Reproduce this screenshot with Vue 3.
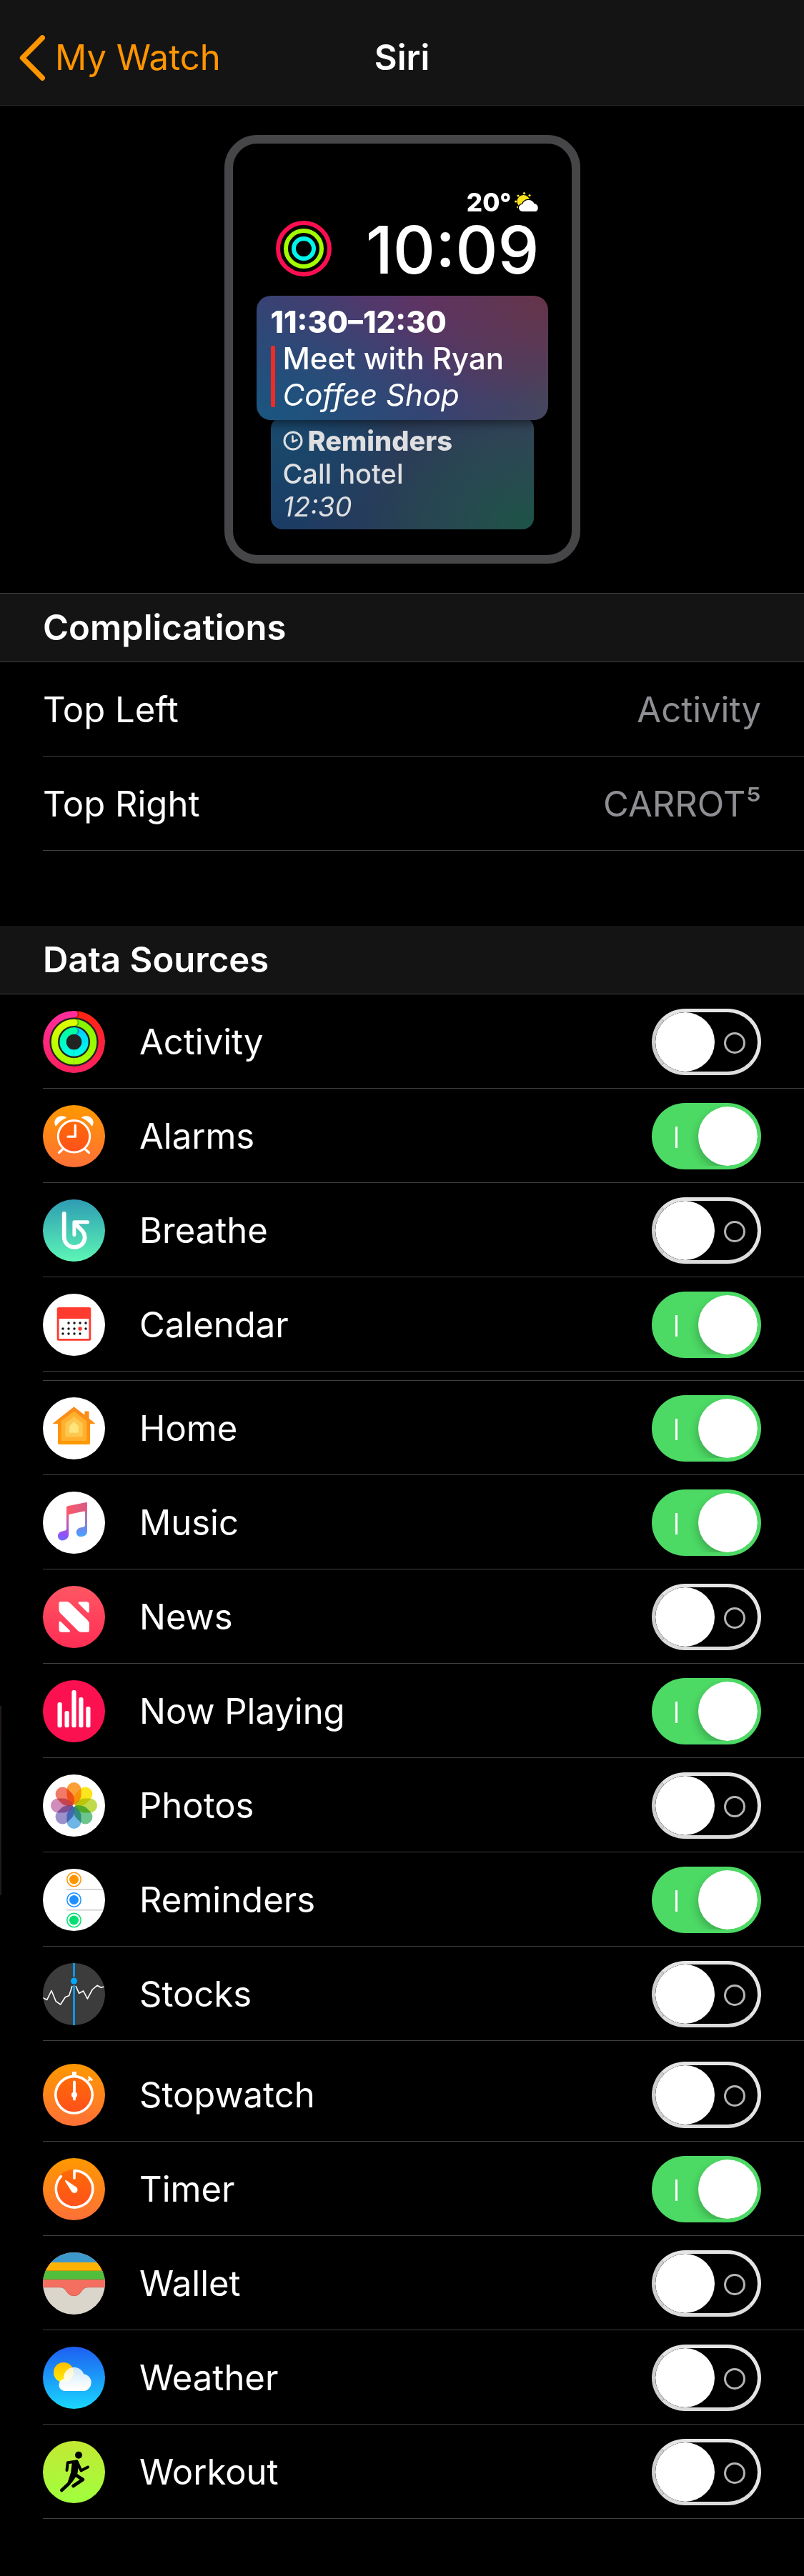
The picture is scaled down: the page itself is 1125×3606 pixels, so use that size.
<script setup>
import { ref, reactive } from 'vue'

const complications = ref([
  { slot: 'Top Left', value: 'Activity' },
  { slot: 'Top Right', value: 'CARROT⁵' },
])

const groups = reactive([
  {
    id: 'first',
    items: [
      { id: 'activity', name: 'Activity', on: false },
      { id: 'alarms', name: 'Alarms', on: true },
      { id: 'breathe', name: 'Breathe', on: false },
      { id: 'calendar', name: 'Calendar', on: true },
    ],
  },
  {
    id: 'second',
    items: [
      { id: 'home', name: 'Home', on: true },
      { id: 'music', name: 'Music', on: true },
      { id: 'news', name: 'News', on: false },
      { id: 'playing', name: 'Now Playing', on: true },
      { id: 'photos', name: 'Photos', on: false },
      { id: 'reminders', name: 'Reminders', on: true },
      { id: 'stocks', name: 'Stocks', on: false },
    ],
  },
  {
    id: 'third',
    items: [
      { id: 'stopwatch', name: 'Stopwatch', on: false },
      { id: 'timer', name: 'Timer', on: true },
      { id: 'wallet', name: 'Wallet', on: false },
      { id: 'weather', name: 'Weather', on: false },
      { id: 'workout', name: 'Workout', on: false },
    ],
  },
])

const petals = ['#fba038', '#fbe51c', '#bfdb4c', '#6cc58c', '#6fb5e5', '#9c90cb', '#d08cba', '#f27a68']

const calendarDots = [
  [36, 41], [44, 41], [52, 41], [60, 41],
  [28, 49], [36, 49], [44, 49], [60, 49],
  [28, 56], [36, 56], [44, 56], [52, 56],
]

const playingBars = [
  [20.5, 31], [30.5, 43], [40.4, 14], [50.3, 24], [60.3, 37],
]

const reminderDots = [
  [15, '#ff9500'], [43.5, '#1e90ff'], [72, '#00e070'],
]
</script>

<template>
  <div class="screen">
    <header class="navbar">
      <a class="back" href="#my-watch">
        <svg class="chevron" viewBox="0 0 36 64" aria-hidden="true">
          <path d="M32.3 3.8 L4.5 32 L32.3 60.2" fill="none" stroke="#ff9500" stroke-width="7.4" stroke-linecap="round" stroke-linejoin="round" />
        </svg>
        <span>My Watch</span>
      </a>
      <h1 class="title">Siri</h1>
    </header>

    <main>
      <div class="preview">
        <div class="watch">
          <div class="temperature">
            <span>20°</span>
            <svg class="forecast" viewBox="0 0 34 28" aria-hidden="true">
              <g fill="#fde51c">
                <circle cx="12.5" cy="13" r="9" />
                <circle cx="13.5" cy="1.6" r="1.6" />
                <circle cx="5" cy="5" r="1.6" />
                <circle cx="21" cy="4.5" r="1.6" />
                <circle cx="1.7" cy="13" r="1.6" />
                <circle cx="4.5" cy="21" r="1.4" />
              </g>
              <path d="M11 27 a5 5 0 0 1 0 -10 a9 9 0 0 1 16.500 -1 a6 6 0 0 1 2.500 11 z" fill="#fff" stroke="#000" stroke-width="2.500" paint-order="stroke" />
            </svg>
          </div>
          <div class="clock-row">
            <svg class="rings" viewBox="0 0 78 78" fill="none" stroke-width="6" aria-hidden="true">
              <circle cx="39" cy="39" r="36" stroke="#fc0f50" />
              <circle cx="39" cy="39" r="25" stroke="#a3fd00" />
              <circle cx="39" cy="39" r="14" stroke="#00f6ea" />
            </svg>
            <time class="clock">10:09</time>
          </div>

          <article class="card event">
            <strong>11:30–12:30</strong>
            <div class="event-body">
              <span class="event-bar"></span>
              <div class="lines">
                <span>Meet with Ryan</span>
                <em>Coffee Shop</em>
              </div>
            </div>
          </article>
          <article class="card reminder">
            <div class="reminder-head">
              <svg class="reminder-clock" viewBox="0 0 28 28" fill="none" stroke="#dfdfe1" stroke-linecap="round" stroke-linejoin="round" aria-hidden="true">
                <circle cx="14" cy="14" r="12" stroke-width="3" />
                <path d="M13.500 7.500 V15.500 L19.500 13" stroke-width="2.600" />
              </svg>
              <strong>Reminders</strong>
            </div>
            <span>Call hotel</span>
            <em>12:30</em>
          </article>
        </div>
      </div>

      <section>
        <h2 class="heading heading-ruled">Complications</h2>
        <ul class="rows">
          <li v-for="c in complications" :key="c.slot" class="row">
            <span class="name">{{ c.slot }}</span>
            <span class="value">{{ c.value }}</span>
          </li>
        </ul>
      </section>

      <section class="sources">
        <h2 class="heading">Data Sources</h2>
        <ul v-for="g in groups" :key="g.id" class="rows" :class="'group-' + g.id">
          <li v-for="item in g.items" :key="item.id" class="row">
            <svg class="icon" viewBox="0 0 87 87" aria-hidden="true">
              <template v-if="item.id === 'activity'">
                <defs>
                  <linearGradient id="ringA1" x1="0" y1="0" x2="0" y2="1"><stop offset="0" stop-color="#ff2412" /><stop offset="1" stop-color="#ff2060" /></linearGradient>
                  <linearGradient id="ringA2" x1="0" y1="0" x2="0" y2="1"><stop offset="0" stop-color="#ff2d9b" /><stop offset="1" stop-color="#ff2060" /></linearGradient>
                  <linearGradient id="ringB1" x1="0" y1="0" x2="0" y2="1"><stop offset="0" stop-color="#86f800" /><stop offset="1" stop-color="#a8ff00" /></linearGradient>
                  <linearGradient id="ringB2" x1="0" y1="0" x2="0" y2="1"><stop offset="0" stop-color="#dcff00" /><stop offset="1" stop-color="#a8ff00" /></linearGradient>
                  <linearGradient id="ringC1" x1="0" y1="0" x2="0" y2="1"><stop offset="0" stop-color="#00d2ff" /><stop offset="1" stop-color="#00fce6" /></linearGradient>
                  <linearGradient id="ringC2" x1="0" y1="0" x2="0" y2="1"><stop offset="0" stop-color="#00ffa0" /><stop offset="1" stop-color="#00fce6" /></linearGradient>
                </defs>
                <rect width="87" height="87" fill="#222" />
                <g fill="none" stroke-width="9.300">
                  <path d="M43.500 4.600 A38.900 38.900 0 0 1 43.500 82.400" stroke="url(#ringA1)" />
                  <path d="M43.500 16.300 A27.200 27.200 0 0 1 43.500 70.700" stroke="url(#ringB1)" />
                  <path d="M43.500 28 A15.500 15.500 0 0 1 43.500 59" stroke="url(#ringC1)" />
                </g>
                <g fill="#000" opacity="0.300">
                  <circle cx="46" cy="5" r="4.600" />
                  <circle cx="46" cy="16.800" r="4.600" />
                  <circle cx="46" cy="28.500" r="4.600" />
                </g>
                <g fill="none" stroke-width="9.300">
                  <path d="M43.600 4.600 A38.900 38.900 0 0 0 43.600 82.400" stroke="url(#ringA2)" />
                  <path d="M43.600 16.300 A27.200 27.200 0 0 0 43.600 70.700" stroke="url(#ringB2)" />
                  <path d="M43.600 28 A15.500 15.500 0 0 0 43.600 59" stroke="url(#ringC2)" />
                </g>
                <circle cx="44" cy="4.600" r="4.650" fill="#ff2d9b" />
                <circle cx="44" cy="16.300" r="4.650" fill="#dcff00" />
                <circle cx="44" cy="28" r="4.650" fill="#00ffa0" />
              </template>

              <template v-else-if="item.id === 'alarms'">
                <rect width="87" height="87" fill="url(#orangeBg)" />
                <circle cx="43.500" cy="43.800" r="22.200" fill="url(#orangeDial)" stroke="#fff" stroke-width="3" />
                <path d="M45.300 28.500 V44.200 H35" fill="none" stroke="#fff" stroke-width="3.300" stroke-linecap="round" stroke-linejoin="round" />
                <path d="M17.500 29 C13 20 22 12 32 16.500 C33 17 33 17.600 32.300 18 C27 20.500 22 24 19 28.800 C18.500 29.600 17.900 29.700 17.500 29 Z M69.500 29 C74 20 65 12 55 16.500 C54 17 54 17.600 54.700 18 C60 20.500 65 24 68 28.800 C68.500 29.600 69.100 29.700 69.500 29 Z" fill="#fff" />
                <path d="M28 61.500 L22.500 66.500 M59 61.500 L64.500 66.500" stroke="#fff" stroke-width="3.300" stroke-linecap="round" />
              </template>

              <template v-else-if="item.id === 'breathe'">
                <defs>
                  <linearGradient id="breatheBg" x1="0" y1="0" x2="0" y2="1"><stop offset="0" stop-color="#2e9cb3" /><stop offset="1" stop-color="#5df6b6" /></linearGradient>
                </defs>
                <rect width="87" height="87" fill="url(#breatheBg)" />
                <g fill="none" stroke="#fff" stroke-width="5.800" stroke-linecap="round" stroke-linejoin="round">
                  <path d="M29.700 19.800 V52 C29.700 61 36 66.800 44.200 66.800 C52.500 66.800 58.600 60.800 58.600 53 C58.600 45 52 41.500 45 33.500" />
                  <path d="M62.500 31.800 H43.900 V49.500" stroke-width="5" />
                </g>
              </template>

              <template v-else-if="item.id === 'calendar'">
                <rect width="87" height="87" fill="#fff" />
                <rect x="19.700" y="19" width="47.600" height="46.700" rx="2.500" fill="#ff3b30" />
                <rect x="22.600" y="35" width="41.800" height="28" fill="#fff" />
                <circle v-for="(d, i) in calendarDots" :key="i" :cx="d[0]" :cy="d[1]" r="1.700" fill="#111" />
                <circle cx="52" cy="49" r="2.700" fill="#ff3b30" />
              </template>

              <template v-else-if="item.id === 'home'">
                <defs>
                  <linearGradient id="homeOuter" x1="0" y1="0" x2="0" y2="1"><stop offset="0" stop-color="#fa8a1e" /><stop offset="1" stop-color="#ff9800" /></linearGradient>
                </defs>
                <rect width="87" height="87" fill="#fff" />
                <path d="M43.500 13.200 L58.400 24.800 V20.200 Q58.400 19.400 59.200 19.400 H63.800 Q64.600 19.400 64.600 20.200 V29.800 L72.800 36.200 Q73 37.200 72 37.200 H66 V64 Q66 66 64 66 H23 Q21 66 21 64 V37.200 H15 Q14 37.200 14.200 36.200 Z" fill="url(#homeOuter)" />
                <path d="M43.500 19.500 L61.300 33 V59.500 Q61.300 61 59.800 61 H27.200 Q25.700 61 25.700 59.500 V33 Z" fill="#ffb02e" />
                <path d="M43.500 26.700 L55.700 36.500 V54 Q55.700 55.200 54.500 55.200 H32.500 Q31.300 55.200 31.300 54 V36.500 Z" fill="#fdc850" />
                <path d="M43.500 34.300 L49.800 40.300 V48.700 Q49.800 49.700 48.800 49.700 H38.200 Q37.200 49.700 37.200 48.700 V40.300 Z" fill="#ffe47c" />
              </template>

              <template v-else-if="item.id === 'music'">
                <defs>
                  <linearGradient id="noteLeft" gradientUnits="userSpaceOnUse" x1="40" y1="22" x2="28" y2="68"><stop offset="0" stop-color="#fc5866" /><stop offset="0.500" stop-color="#c058b8" /><stop offset="0.850" stop-color="#8f52f8" /><stop offset="1" stop-color="#6f6cff" /></linearGradient>
                  <linearGradient id="noteRight" gradientUnits="userSpaceOnUse" x1="52" y1="16" x2="58" y2="63"><stop offset="0" stop-color="#f05a72" /><stop offset="0.450" stop-color="#a878b8" /><stop offset="0.850" stop-color="#5b93f6" /><stop offset="1" stop-color="#44a8fb" /></linearGradient>
                  <linearGradient id="noteBeam" x1="0" y1="0" x2="1" y2="0"><stop offset="0" stop-color="#fc5868" /><stop offset="1" stop-color="#d85c88" /></linearGradient>
                </defs>
                <rect width="87" height="87" fill="#fff" />
                <path d="M33 24 H36.100 V60 C36.100 65 32 68.400 27 68.400 C23.500 68.400 21 65.800 21 62.300 C21 58.500 23.500 56 28 55.200 C31.500 54.600 33 54.200 33 51.500 Z" fill="url(#noteLeft)" />
                <path d="M58.900 18 H62 V55 C62 60.500 58.500 63.100 53 63.100 C49.300 63.100 46.800 60.500 46.800 57.200 C46.800 53.500 49.200 51 53.500 50.300 C57 49.700 58.900 49.200 58.900 46.500 Z" fill="url(#noteRight)" />
                <path d="M33 22.500 Q33 20.700 34.700 20.300 L60.500 15.100 Q62 14.900 62 16.400 V28.500 H58.900 Q58.900 27.300 57.600 27.600 L37.500 31.700 Q36.100 32 36.100 33.500 H33 Z" fill="url(#noteBeam)" />
              </template>

              <template v-else-if="item.id === 'news'">
                <defs>
                  <linearGradient id="newsBg" x1="0" y1="0" x2="0" y2="1"><stop offset="0" stop-color="#ff5763" /><stop offset="1" stop-color="#ff2d55" /></linearGradient>
                </defs>
                <rect width="87" height="87" fill="url(#newsBg)" />
                <g fill="#fff" stroke="#fff" stroke-width="5" stroke-linejoin="round">
                  <path d="M24.900 24.600 H33 Q35 24.600 36.500 26 L61 50 Q62.400 51.400 62.400 53.500 V62.200 H54 Q52 62.200 50.500 60.800 L26.300 36.500 Q24.900 35 24.900 33 Z" />
                  <path d="M51 23.700 H61 Q63.300 23.700 63.300 26 V36 Z" stroke-width="3" />
                  <path d="M24 51 V61 Q24 63.200 26.200 63.200 H36.500 Z" stroke-width="3" />
                </g>
              </template>

              <template v-else-if="item.id === 'playing'">
                <rect width="87" height="87" fill="#fc1150" />
                <rect v-for="(b, i) in playingBars" :key="i" :x="b[0]" :y="b[1]" width="6.200" :height="66.200 - b[1]" rx="2.500" fill="#fff" />
              </template>

              <template v-else-if="item.id === 'photos'">
                <rect width="87" height="87" fill="#fff" />
                <g transform="translate(43.500 43.500)">
                  <path v-for="(p, i) in petals" :key="p" class="petal" d="M0 -0.500 C-4 -3 -10 -8.500 -10 -14 V-22.500 A10 10 0 0 1 10 -22.500 V-14 C10 -8.500 4 -3 0 -0.500 Z" :fill="p" :transform="`rotate(${i * 45})`" />
                </g>
                <circle cx="43.500" cy="43.500" r="1.800" fill="#fff" />
              </template>

              <template v-else-if="item.id === 'reminders'">
                <rect width="87" height="87" fill="#fff" />
                <path d="M33 29 H87 M33 57.700 H87" stroke="#c9c8ce" stroke-width="1.600" />
                <g v-for="d in reminderDots" :key="d[0]">
                  <circle cx="43.500" :cy="d[0]" r="9.700" fill="none" :stroke="d[1]" stroke-width="1.500" />
                  <circle cx="43.500" :cy="d[0]" r="6.500" :fill="d[1]" />
                </g>
              </template>

              <template v-else-if="item.id === 'stocks'">
                <rect width="87" height="87" fill="#3c3c3c" />
                <path d="M43.500 0 V19 M43.500 31 V87" stroke="#0b97e6" stroke-width="3" />
                <circle cx="43.500" cy="25" r="4.500" fill="#00a9ff" />
                <path d="M0 48.500 L5.700 51.500 L12 38.500 L18.300 53.700 L24.700 58 L31.300 47.700 L36.700 45.500 L41 32 M46 32 L50.700 42.300 L56.700 39 L62.300 50 L69.300 37 L76 31.300 L81.300 34.300 L87 32.700" fill="none" stroke="#fff" stroke-width="1.600" stroke-linejoin="round" />
              </template>

              <template v-else-if="item.id === 'stopwatch'">
                <rect width="87" height="87" fill="url(#orangeBg)" />
                <circle cx="43.500" cy="43.300" r="25.700" fill="url(#orangeDial)" stroke="#fff" stroke-width="3.600" />
                <path d="M44 11 V18" stroke="#fff" stroke-width="6" />
                <path d="M63.500 23.800 L66 21.300" stroke="#fff" stroke-width="3" />
                <path d="M64.500 18.800 L68.300 22.500" stroke="#fff" stroke-width="3" stroke-linecap="round" />
                <path d="M44 25.500 V49.500" stroke="#fff" stroke-width="3.800" stroke-linecap="round" />
                <circle cx="44" cy="43.500" r="4" fill="#fff" />
              </template>

              <template v-else-if="item.id === 'timer'">
                <rect width="87" height="87" fill="url(#orangeBg)" />
                <circle cx="43.500" cy="43.300" r="27.300" fill="url(#orangeDial)" />
                <path d="M44 28 V17.600 A25.700 25.700 0 1 1 25.400 25.600" fill="none" stroke="#fff" stroke-width="3.600" stroke-linecap="round" stroke-linejoin="round" />
                <path d="M31.300 31 Q31.800 30.600 32.500 31.100 L46.300 40.300 A4.600 4.600 0 1 1 39.800 46.200 L31 32.300 Q30.700 31.500 31.300 31 Z" fill="#fff" />
              </template>

              <template v-else-if="item.id === 'wallet'">
                <rect width="87" height="87" fill="#dad6cb" />
                <rect width="87" height="14" fill="#3e98cb" />
                <rect y="14" width="87" height="12" fill="#ffb204" />
                <rect y="26" width="87" height="12" fill="#52bf3c" />
                <path d="M0 38 H87 V49 H63 C53 49 55 61 43.500 61 C32 61 34 49 24 49 H0 Z" fill="#f46f60" />
                <path d="M0 25.600 H87" stroke="#c89610" stroke-width="1" />
                <path d="M0 37.600 H87" stroke="#5a9c34" stroke-width="1" />
                <path d="M0 48.700 H24 C34 48.700 32 60.700 43.500 60.700 C55 60.700 53 48.700 63 48.700 H87" fill="none" stroke="#d8665a" stroke-width="1" />
              </template>

              <template v-else-if="item.id === 'weather'">
                <defs>
                  <linearGradient id="skyBg" x1="0" y1="0" x2="0" y2="1"><stop offset="0" stop-color="#1e5ef2" /><stop offset="1" stop-color="#19d7fe" /></linearGradient>
                  <linearGradient id="sunFill" x1="0" y1="0" x2="0" y2="1"><stop offset="0" stop-color="#ffbe00" /><stop offset="1" stop-color="#ffee00" /></linearGradient>
                  <linearGradient id="cloudFill" x1="0" y1="0" x2="0" y2="1"><stop offset="0" stop-color="#fff" stop-opacity="0.780" /><stop offset="0.900" stop-color="#fff" /></linearGradient>
                </defs>
                <rect width="87" height="87" fill="url(#skyBg)" />
                <circle cx="29" cy="36" r="14" fill="url(#sunFill)" />
                <path d="M31.500 62 A8.600 8.600 0 0 1 29.200 45 A14.500 14.500 0 0 1 57.200 38.300 A12 12 0 0 1 58 62 Z" fill="url(#cloudFill)" />
              </template>

              <template v-else>
                <defs>
                  <linearGradient id="workoutBg" x1="0" y1="0" x2="0" y2="1"><stop offset="0" stop-color="#c3e833" /><stop offset="1" stop-color="#9fff3e" /></linearGradient>
                </defs>
                <rect width="87" height="87" fill="url(#workoutBg)" />
                <circle cx="50" cy="19.700" r="5" fill="#000" />
                <g fill="none" stroke="#000" stroke-width="4" stroke-linecap="round" stroke-linejoin="round">
                  <path d="M33.500 41 L34.800 30.300 L47.500 28.500 L53.500 41.500 L63 36.500" />
                  <path d="M45 47 L56 54 L42.500 63" stroke-width="4.600" />
                  <path d="M41 46 L36.500 59.500 L26.300 69" stroke-width="4.600" />
                </g>
                <path d="M41 29 L48 26.500 Q51 30 50.500 33 L48 47.500 L40 59 L36 58 L38.500 49 Z" fill="#000" />
              </template>
            </svg>
            <label class="name" :for="'source-' + item.id">{{ item.name }}</label>
            <input :id="'source-' + item.id" v-model="item.on" class="toggle" type="checkbox" role="switch">
          </li>
        </ul>
        <span class="edge" aria-hidden="true"></span>
      </section>
    </main>

    <svg class="shared-defs" aria-hidden="true">
      <defs>
        <linearGradient id="orangeBg" x1="0" y1="0" x2="0" y2="1"><stop offset="0" stop-color="#ff9800" /><stop offset="1" stop-color="#ff7037" /></linearGradient>
        <linearGradient id="orangeDial" x1="0" y1="0" x2="0" y2="1"><stop offset="0" stop-color="#ff6a06" /><stop offset="1" stop-color="#ff511c" /></linearGradient>
      </defs>
    </svg>
  </div>
</template>

<style>
html,
body {
  background: #000;
}
</style>

<style scoped>
.screen {
  position: relative;
  min-height: 100vh;
  background: #000;
  color: #fff;
  font-family: Inter, "Liberation Sans", sans-serif;
  font-size: 49px;
  line-height: 60px;
}

.shared-defs {
  position: absolute;
  width: 0;
  height: 0;
}

.navbar {
  display: grid;
  grid-template-columns: 1fr auto 1fr;
  align-items: center;
  height: 132px;
  padding-top: 15px;
  background: #141414;
  border-bottom: 1px solid #262626;
}

.back {
  display: flex;
  align-items: center;
  gap: 14px;
  padding-left: 27px;
  color: #ff9500;
  text-decoration: none;
}

.chevron {
  width: 36px;
  height: 64px;
}

.title {
  margin: 0;
  font-size: 49px;
  font-weight: 600;
}

.preview {
  display: flex;
  justify-content: center;
  padding: 41px 0;
}

.watch {
  box-sizing: border-box;
  width: 498px;
  padding: 60px 33px 36px;
  border: 12px solid #464648;
  border-radius: 46px;
}

.temperature {
  display: flex;
  align-items: center;
  justify-content: flex-end;
  gap: 4px;
  padding-right: 13px;
  font-size: 35px;
  font-weight: 800;
  line-height: 44px;
}

.forecast {
  width: 34px;
  height: 28px;
}

.clock-row {
  display: flex;
  align-items: center;
  justify-content: space-between;
  height: 78px;
  margin: 4px 12px 27px 27px;
}

.rings {
  width: 78px;
  height: 78px;
}

.clock {
  font-size: 92px;
  font-weight: 500;
  line-height: 82px;
  padding-top: 4px;
}

.card {
  display: flex;
  flex-direction: column;
}

.event {
  position: relative;
  z-index: 1;
  padding: 11px 20px 10px;
  border-radius: 20px;
  background:
    radial-gradient(ellipse 75% 110% at 0% 100%, #195680 0%, rgba(25, 86, 128, 0) 100%),
    radial-gradient(ellipse 55% 90% at 100% 0%, #66334a 0%, rgba(102, 51, 74, 0) 100%),
    radial-gradient(ellipse 60% 100% at 60% 0%, #5e3468 0%, rgba(94, 52, 104, 0) 100%),
    linear-gradient(90deg, #3a4072 0%, #3a4070 60%, #45455e 100%);
  box-shadow: 0 4px 14px rgba(0, 0, 0, 0.5);
  font-size: 42px;
  font-weight: 500;
  line-height: 51px;
}

.event-body {
  display: flex;
  gap: 11px;
}

.event-bar {
  width: 6px;
  margin: 8px 0;
  border-radius: 2px;
  background: #ee2b24;
}

.lines {
  display: flex;
  flex-direction: column;
}

.card em {
  font-weight: 400;
}

.card strong {
  font-weight: 800;
}

.reminder {
  margin: -4px 20px 0;
  padding: 10px 17px 9px;
  border-radius: 16px;
  background:
    radial-gradient(ellipse 65% 110% at 100% 100%, #1d5347 0%, rgba(29, 83, 71, 0) 100%),
    radial-gradient(ellipse 50% 80% at 0% 20%, #19496c 0%, rgba(25, 73, 108, 0) 100%),
    linear-gradient(90deg, #1a3c66 0%, #2b3c58 50%, #36415a 100%);
  color: #dfdfe1;
  font-size: 38px;
  font-weight: 500;
  line-height: 46px;
}

.reminder-head {
  display: flex;
  align-items: center;
  gap: 7px;
}

.reminder-clock {
  width: 28px;
  height: 28px;
}

.heading {
  display: flex;
  align-items: center;
  height: 95px;
  margin: 0;
  padding: 0 60px;
  background: #141414;
  border-bottom: 1px solid #3f3f41;
  font-size: 49px;
  font-weight: 600;
}

.heading-ruled {
  border-top: 1px solid #3f3f41;
}

.rows {
  margin: 0 0 0 60px;
  padding: 0;
  list-style: none;
}

.row {
  display: flex;
  align-items: center;
  height: 129px;
  padding: 2px 60px 0 0;
  border-bottom: 1px solid #3f3f41;
}

.name {
  flex: 1;
}

.value {
  color: #8e8e93;
}

.sources {
  position: relative;
  margin-top: 105px;
  padding-bottom: 80px;
}

.group-second {
  margin-top: 12px;
  border-top: 1px solid #3f3f41;
}

.group-third {
  margin-top: 9px;
}

.icon {
  width: 87px;
  height: 87px;
  margin-right: 48px;
  border-radius: 50%;
}

.petal {
  mix-blend-mode: multiply;
}

.toggle {
  appearance: none;
  position: relative;
  box-sizing: border-box;
  width: 153px;
  height: 93px;
  margin: 0;
  border: 5px solid #e5e5e5;
  border-radius: 47px;
  background: #000;
  overflow: hidden;
}

.toggle::before {
  content: "";
  position: absolute;
  top: 28px;
  right: 17px;
  box-sizing: border-box;
  width: 30px;
  height: 30px;
  border: 3px solid #b3b3b3;
  border-radius: 50%;
}

.toggle::after {
  content: "";
  position: absolute;
  top: 0;
  left: 0;
  width: 83px;
  height: 83px;
  border-radius: 50%;
  background: #fff;
}

.toggle:not(:checked) {
  border-color: #e5e5e5 #e5e5e5 #dcdcdc #cfcfcf;
}

.toggle:checked {
  border-color: transparent;
  background: #4cd964;
  background-clip: border-box;
  background-origin: border-box;
}

.toggle:checked::before {
  right: auto;
  left: 28px;
  width: 3px;
  border: 0;
  border-radius: 0;
  background: #fff;
}

.toggle:checked::after {
  right: 0;
  left: auto;
  box-shadow: -2px 6px 12px rgba(0, 0, 0, 0.2);
}

.edge {
  position: absolute;
  top: 1092px;
  left: 0;
  width: 2px;
  height: 265px;
  background: linear-gradient(#241a1d, #1c1c1c);
}
</style>
